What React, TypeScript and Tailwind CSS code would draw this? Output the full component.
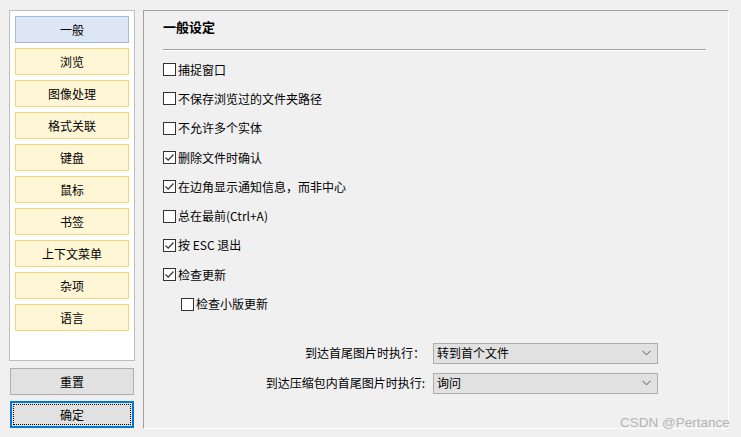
import React from "react";

const font = { fontFamily: '"Microsoft YaHei", "Noto Sans CJK SC", "Noto Sans", sans-serif' };

const navItems = ["一般", "浏览", "图像处理", "格式关联", "键盘", "鼠标", "书签", "上下文菜单", "杂项", "语言"];

const options: { label: string; checked: boolean; indent?: boolean }[] = [
  { label: "捕捉窗口", checked: false },
  { label: "不保存浏览过的文件夹路径", checked: false },
  { label: "不允许多个实体", checked: false },
  { label: "删除文件时确认", checked: true },
  { label: "在边角显示通知信息，而非中心", checked: true },
  { label: "总在最前(Ctrl+A)", checked: false },
  { label: "按 ESC 退出", checked: true },
  { label: "检查更新", checked: true },
  { label: "检查小版更新", checked: false, indent: true },
];

function CheckBox({ checked }: { checked: boolean }) {
  return (
    <span className="flex h-[13px] w-[13px] shrink-0 items-center justify-center border border-[#333333] bg-white">
      {checked && (
        <svg width="11" height="11" viewBox="0 0 11 11">
          <path d="M1.5 5.5 L4.2 8.2 L9.5 2.5" fill="none" stroke="#333" strokeWidth="1.2" />
        </svg>
      )}
    </span>
  );
}

function Select({ value }: { value: string }) {
  return (
    <div className="flex h-[21px] w-[225px] items-center justify-between border border-[#adadad] bg-[#e1e1e1] pl-[3px] pr-[6px]">
      <span>{value}</span>
      <svg width="9" height="6" viewBox="0 0 9 6">
        <path d="M0.5 0.8 L4.5 4.8 L8.5 0.8" fill="none" stroke="#555" strokeWidth="1" />
      </svg>
    </div>
  );
}

export default function App() {
  return (
    <div className="relative flex h-[437px] w-[741px] bg-[#f0f0f0] pl-[9px] pt-[10px] text-[12px] text-black" style={font}>
      <div className="flex w-[126px] flex-col">
        <div className="flex h-[351px] flex-col gap-[5px] border border-[#bcbcbc] bg-white p-[5px]">
          {navItems.map((item, i) => (
            <div
              key={item}
              className={
                "flex h-[27px] items-center justify-center border " +
                (i === 0 ? "border-[#9fb9e3] bg-[#dde6f4]" : "border-[#fbd27c] bg-[#fff6d6]")
              }
            >
              {item}
            </div>
          ))}
        </div>
        <div className="mx-[1px] mt-[7px] flex h-[27px] items-center justify-center border border-[#adadad] bg-[#e1e1e1]">
          重置
        </div>
        <div className="mx-[1px] mt-[6px] flex h-[27px] items-center justify-center border-2 border-[#0078d7] bg-[#e1e1e1] p-[1px]">
          <div className="flex h-full w-full items-center justify-center border border-dotted border-black">确定</div>
        </div>
      </div>

      <div className="ml-[8px] flex h-[419px] w-[586px] flex-col border-b border-l border-r border-t border-b-white border-l-[#a0a0a0] border-r-white border-t-[#a0a0a0] pl-[19px] pr-[22px]">
        <div className="mt-[7px] text-[13px] font-bold leading-[18px]">一般设定</div>
        <div className="mt-[13px] h-[2px] border-t border-b border-t-[#a0a0a0] border-b-white" />
        <div className="mt-[4px] flex flex-col">
          {options.map((o) => (
            <div key={o.label} className={"flex h-[29.3px] items-center gap-[2px] " + (o.indent ? "pl-[18px]" : "")}>
              <CheckBox checked={o.checked} />
              <span>{o.label}</span>
            </div>
          ))}
        </div>
        <div className="mt-[24px] flex flex-col gap-[9px]">
          <div className="flex items-center">
            <span className="w-[270px] pr-[8px] text-right">到达首尾图片时执行：</span>
            <Select value="转到首个文件" />
          </div>
          <div className="flex items-center">
            <span className="w-[270px] pr-[8px] text-right">到达压缩包内首尾图片时执行:</span>
            <Select value="询问" />
          </div>
        </div>
      </div>

      <span
        className="absolute left-[620px] top-[413px] text-[13.5px] text-[#b4b4b4]"
        style={{ fontFamily: '"Liberation Sans", Arial, sans-serif' }}
      >
        CSDN @Pertance
      </span>
    </div>
  );
}
